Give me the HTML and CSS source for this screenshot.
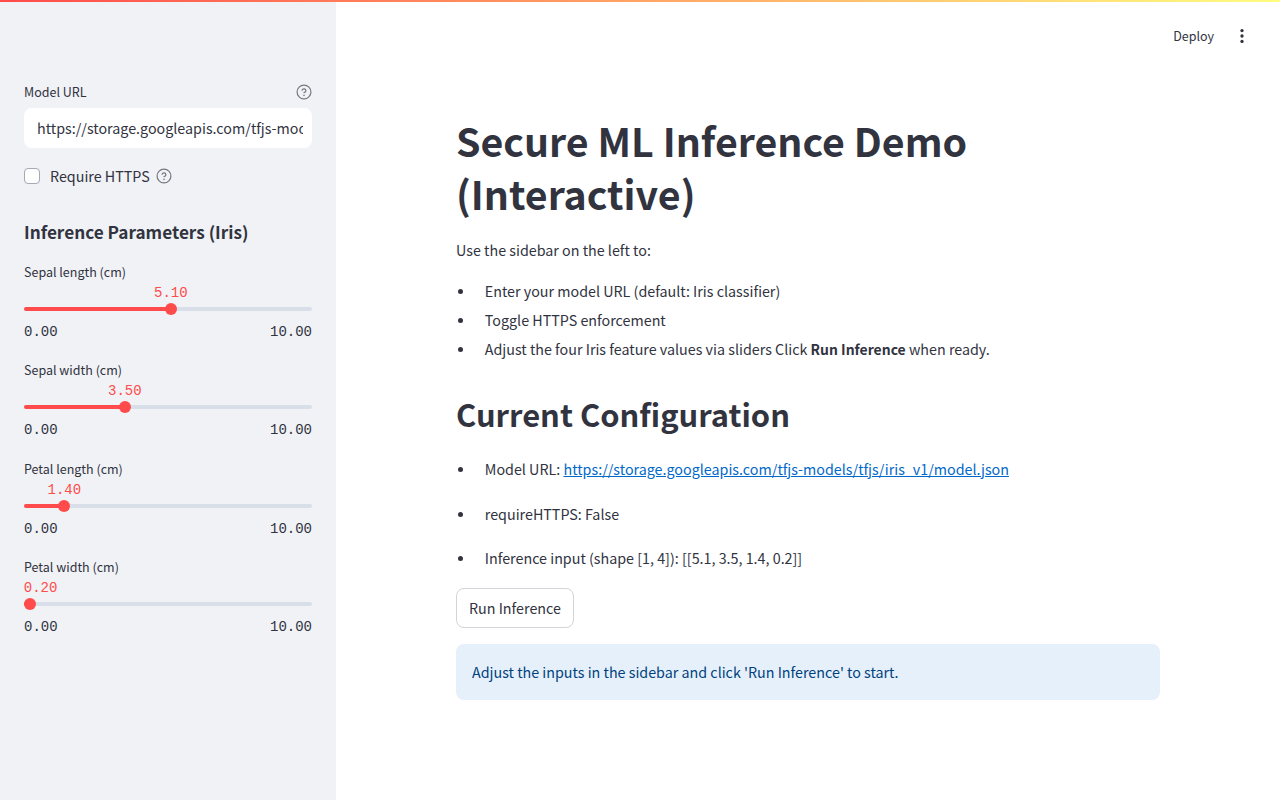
FILE: index.html
```html
<!DOCTYPE html>
<html lang="en">
<head>
<meta charset="utf-8">
<title>Secure ML Inference Demo</title>
<link rel="stylesheet" href="styles.css">
</head>
<body>
<div class="topline"></div>
<div class="app">
  <aside class="sidebar">
    <div class="field-head">
      <label class="label">Model URL</label>
      <svg class="help" viewBox="0 0 24 24" width="16" height="16"><circle cx="12" cy="12" r="10.4" fill="none" stroke="currentColor" stroke-width="1.8"/><path d="M9.1 9.3a3 3 0 0 1 5.8 1c0 2-2.9 2.7-2.9 2.7" fill="none" stroke="currentColor" stroke-width="1.8" stroke-linecap="round"/><circle cx="12" cy="17" r="1.2" fill="currentColor"/></svg>
    </div>
    <div class="url-input"><span class="url-text">https://storage.googleapis.com/tfjs-models/tfjs/iris_v1/model.json</span></div>
    <div class="check-row">
      <span class="checkbox"></span>
      <span class="check-label">Require HTTPS</span>
      <svg class="help" viewBox="0 0 24 24" width="16" height="16"><circle cx="12" cy="12" r="10.4" fill="none" stroke="currentColor" stroke-width="1.8"/><path d="M9.1 9.3a3 3 0 0 1 5.8 1c0 2-2.9 2.7-2.9 2.7" fill="none" stroke="currentColor" stroke-width="1.8" stroke-linecap="round"/><circle cx="12" cy="17" r="1.2" fill="currentColor"/></svg>
    </div>
    <h3 class="side-title">Inference Parameters (Iris)</h3>

    <div class="slider">
      <div class="label">Sepal length (cm)</div>
      <div class="track-area">
        <div class="track"><div class="fill" style="width:51%"></div></div>
        <div class="thumb" style="left:51%"><span class="value">5.10</span></div>
      </div>
      <div class="ticks"><span>0.00</span><span>10.00</span></div>
    </div>
    <div class="slider">
      <div class="label">Sepal width (cm)</div>
      <div class="track-area">
        <div class="track"><div class="fill" style="width:35%"></div></div>
        <div class="thumb" style="left:35%"><span class="value">3.50</span></div>
      </div>
      <div class="ticks"><span>0.00</span><span>10.00</span></div>
    </div>
    <div class="slider">
      <div class="label">Petal length (cm)</div>
      <div class="track-area">
        <div class="track"><div class="fill" style="width:14%"></div></div>
        <div class="thumb" style="left:14%"><span class="value">1.40</span></div>
      </div>
      <div class="ticks"><span>0.00</span><span>10.00</span></div>
    </div>
    <div class="slider">
      <div class="label">Petal width (cm)</div>
      <div class="track-area">
        <div class="track"><div class="fill" style="width:2%"></div></div>
        <div class="thumb" style="left:2%"><span class="value value-start">0.20</span></div>
      </div>
      <div class="ticks"><span>0.00</span><span>10.00</span></div>
    </div>
  </aside>

  <main class="main">
    <header class="toolbar">
      <span class="deploy">Deploy</span>
      <svg class="kebab" viewBox="0 0 24 24" width="20" height="20"><circle cx="12" cy="5.5" r="2" fill="currentColor"/><circle cx="12" cy="12" r="2" fill="currentColor"/><circle cx="12" cy="18.5" r="2" fill="currentColor"/></svg>
    </header>
    <div class="content">
      <h1 class="title">Secure ML Inference Demo (Interactive)</h1>
      <p class="intro">Use the sidebar on the left to:</p>
      <ul class="list">
        <li>Enter your model URL (default: Iris classifier)</li>
        <li>Toggle HTTPS enforcement</li>
        <li>Adjust the four Iris feature values via sliders Click <strong>Run Inference</strong> when ready.</li>
      </ul>
      <h2 class="subtitle">Current Configuration</h2>
      <ul class="list list-spaced">
        <li>Model URL: <a href="#">https://storage.googleapis.com/tfjs-models/tfjs/iris_v1/model.json</a></li>
        <li>requireHTTPS: False</li>
        <li>Inference input (shape [1, 4]): [[5.1, 3.5, 1.4, 0.2]]</li>
      </ul>
      <button class="run" type="button">Run Inference</button>
      <div class="info">Adjust the inputs in the sidebar and click 'Run Inference' to start.</div>
    </div>
  </main>
</div>
</body>
</html>
```
FILE: styles.css
```css
* { box-sizing: border-box; }
html, body { margin: 0; height: 100%; overflow: hidden; }
body {
  font-family: "Noto Sans CJK SC", "Noto Sans", sans-serif;
  font-size: 14.3px;
  color: #31333f;
  background: #fff;
}
.topline {
  position: fixed;
  top: 0; left: 0; right: 0;
  height: 2px;
  background: linear-gradient(90deg, #ff4b4b, #fffd80);
  z-index: 2;
}
.app { display: flex; height: 800px; }
.sidebar {
  width: 336px;
  flex: none;
  background: #f0f2f6;
  padding: 80px 24px 0;
}
.field-head {
  display: flex;
  justify-content: space-between;
  align-items: center;
  height: 24px;
  margin-bottom: 4px;
}
.label { font-size: 12.5px; line-height: 24px; display: block; }
.help { color: #75767f; flex: none; }
.url-input {
  height: 40px;
  background: #fff;
  border-radius: 8px;
  padding: 0 9px 0 13px;
  display: flex;
  align-items: center;
}
.url-text {
  display: block;
  width: 100%;
  overflow: hidden;
  white-space: nowrap;
  line-height: 24px;
}
.check-row {
  display: flex;
  align-items: center;
  height: 24px;
  margin-top: 16px;
}
.checkbox {
  width: 16px; height: 16px;
  background: #fff;
  border: 1px solid #a3a8b4;
  border-radius: 4px;
  margin-right: 10px;
}
.check-label { margin-right: 6.5px; line-height: 24px; }
.side-title {
  font-size: 17.2px;
  font-weight: 600;
  line-height: 28px;
  margin: 30px 0 0;
}
.slider { height: 98.4px; }
.side-title + .slider { margin-top: 14px; }
.slider .label { height: 24px; }
.track-area {
  position: relative;
  height: 24px;
  display: flex;
  align-items: center;
  margin-top: 13px;
}
.track {
  width: 100%;
  height: 4px;
  background: #d9dfe8;
  border-radius: 4px;
  overflow: hidden;
}
.fill { height: 100%; background: #ff4b4b; }
.thumb {
  position: absolute;
  top: 50%;
  width: 12px; height: 12px;
  margin: -6px 0 0 -6px;
  background: #ff4b4b;
  border-radius: 50%;
}
.value {
  position: absolute;
  left: 50%;
  bottom: 15px;
  transform: translateX(-50%);
  font-family: "Liberation Mono", monospace;
  font-size: 14px;
  line-height: 14px;
  color: #ff4b4b;
}
.value-start { left: 0; transform: none; }
.ticks {
  display: flex;
  justify-content: space-between;
  font-family: "Liberation Mono", monospace;
  font-size: 14px;
  line-height: 24px;
  margin-top: -1px;
}
.main { flex: 1; display: flex; flex-direction: column; }
.toolbar {
  height: 60px;
  padding: 16px 28px 0 0;
  display: flex;
  justify-content: flex-end;
  align-items: flex-start;
  gap: 18px;
}
.deploy { font-size: 12.5px; line-height: 40px; height: 40px; }
.kebab { margin-top: 10px; }
.content { width: 704px; margin-left: 120px; padding-top: 54px; }
.title {
  font-size: 39.3px;
  font-weight: 700;
  line-height: 52.8px;
  margin: 0;
}
.intro { margin: 17px 0 0; line-height: 25.6px; }
.list {
  margin: 16px 0 0;
  padding: 0 0 0 28.8px;
  line-height: 25.6px;
  list-style: none;
}
.list li { margin-bottom: 3.2px; position: relative; }
.list li::before {
  content: "";
  position: absolute;
  left: -27px;
  top: 11px;
  width: 5px;
  height: 5px;
  border-radius: 50%;
  background: #31333f;
}
.list strong { font-weight: 600; font-size: 13.95px; }
.subtitle {
  font-size: 30.9px;
  font-weight: 600;
  line-height: 43.2px;
  margin: 30px 0 0;
}
.list-spaced { margin-top: 20.3px; }
.list-spaced li { margin-bottom: 19.2px; }
.list-spaced li:last-child { margin-bottom: 16.9px; }
a { color: #0068c9; }
.run {
  display: block;
  height: 40px;
  padding: 0 12px;
  margin-top: 0;
  background: #fff;
  border: 1px solid #d2d4d9;
  border-radius: 8px;
  font: inherit;
  color: inherit;
}
.info {
  margin-top: 16px;
  height: 56px;
  padding: 0 16px;
  line-height: 56px;
  background: #e6f0fa;
  border-radius: 8px;
  color: #004280;
}
```
